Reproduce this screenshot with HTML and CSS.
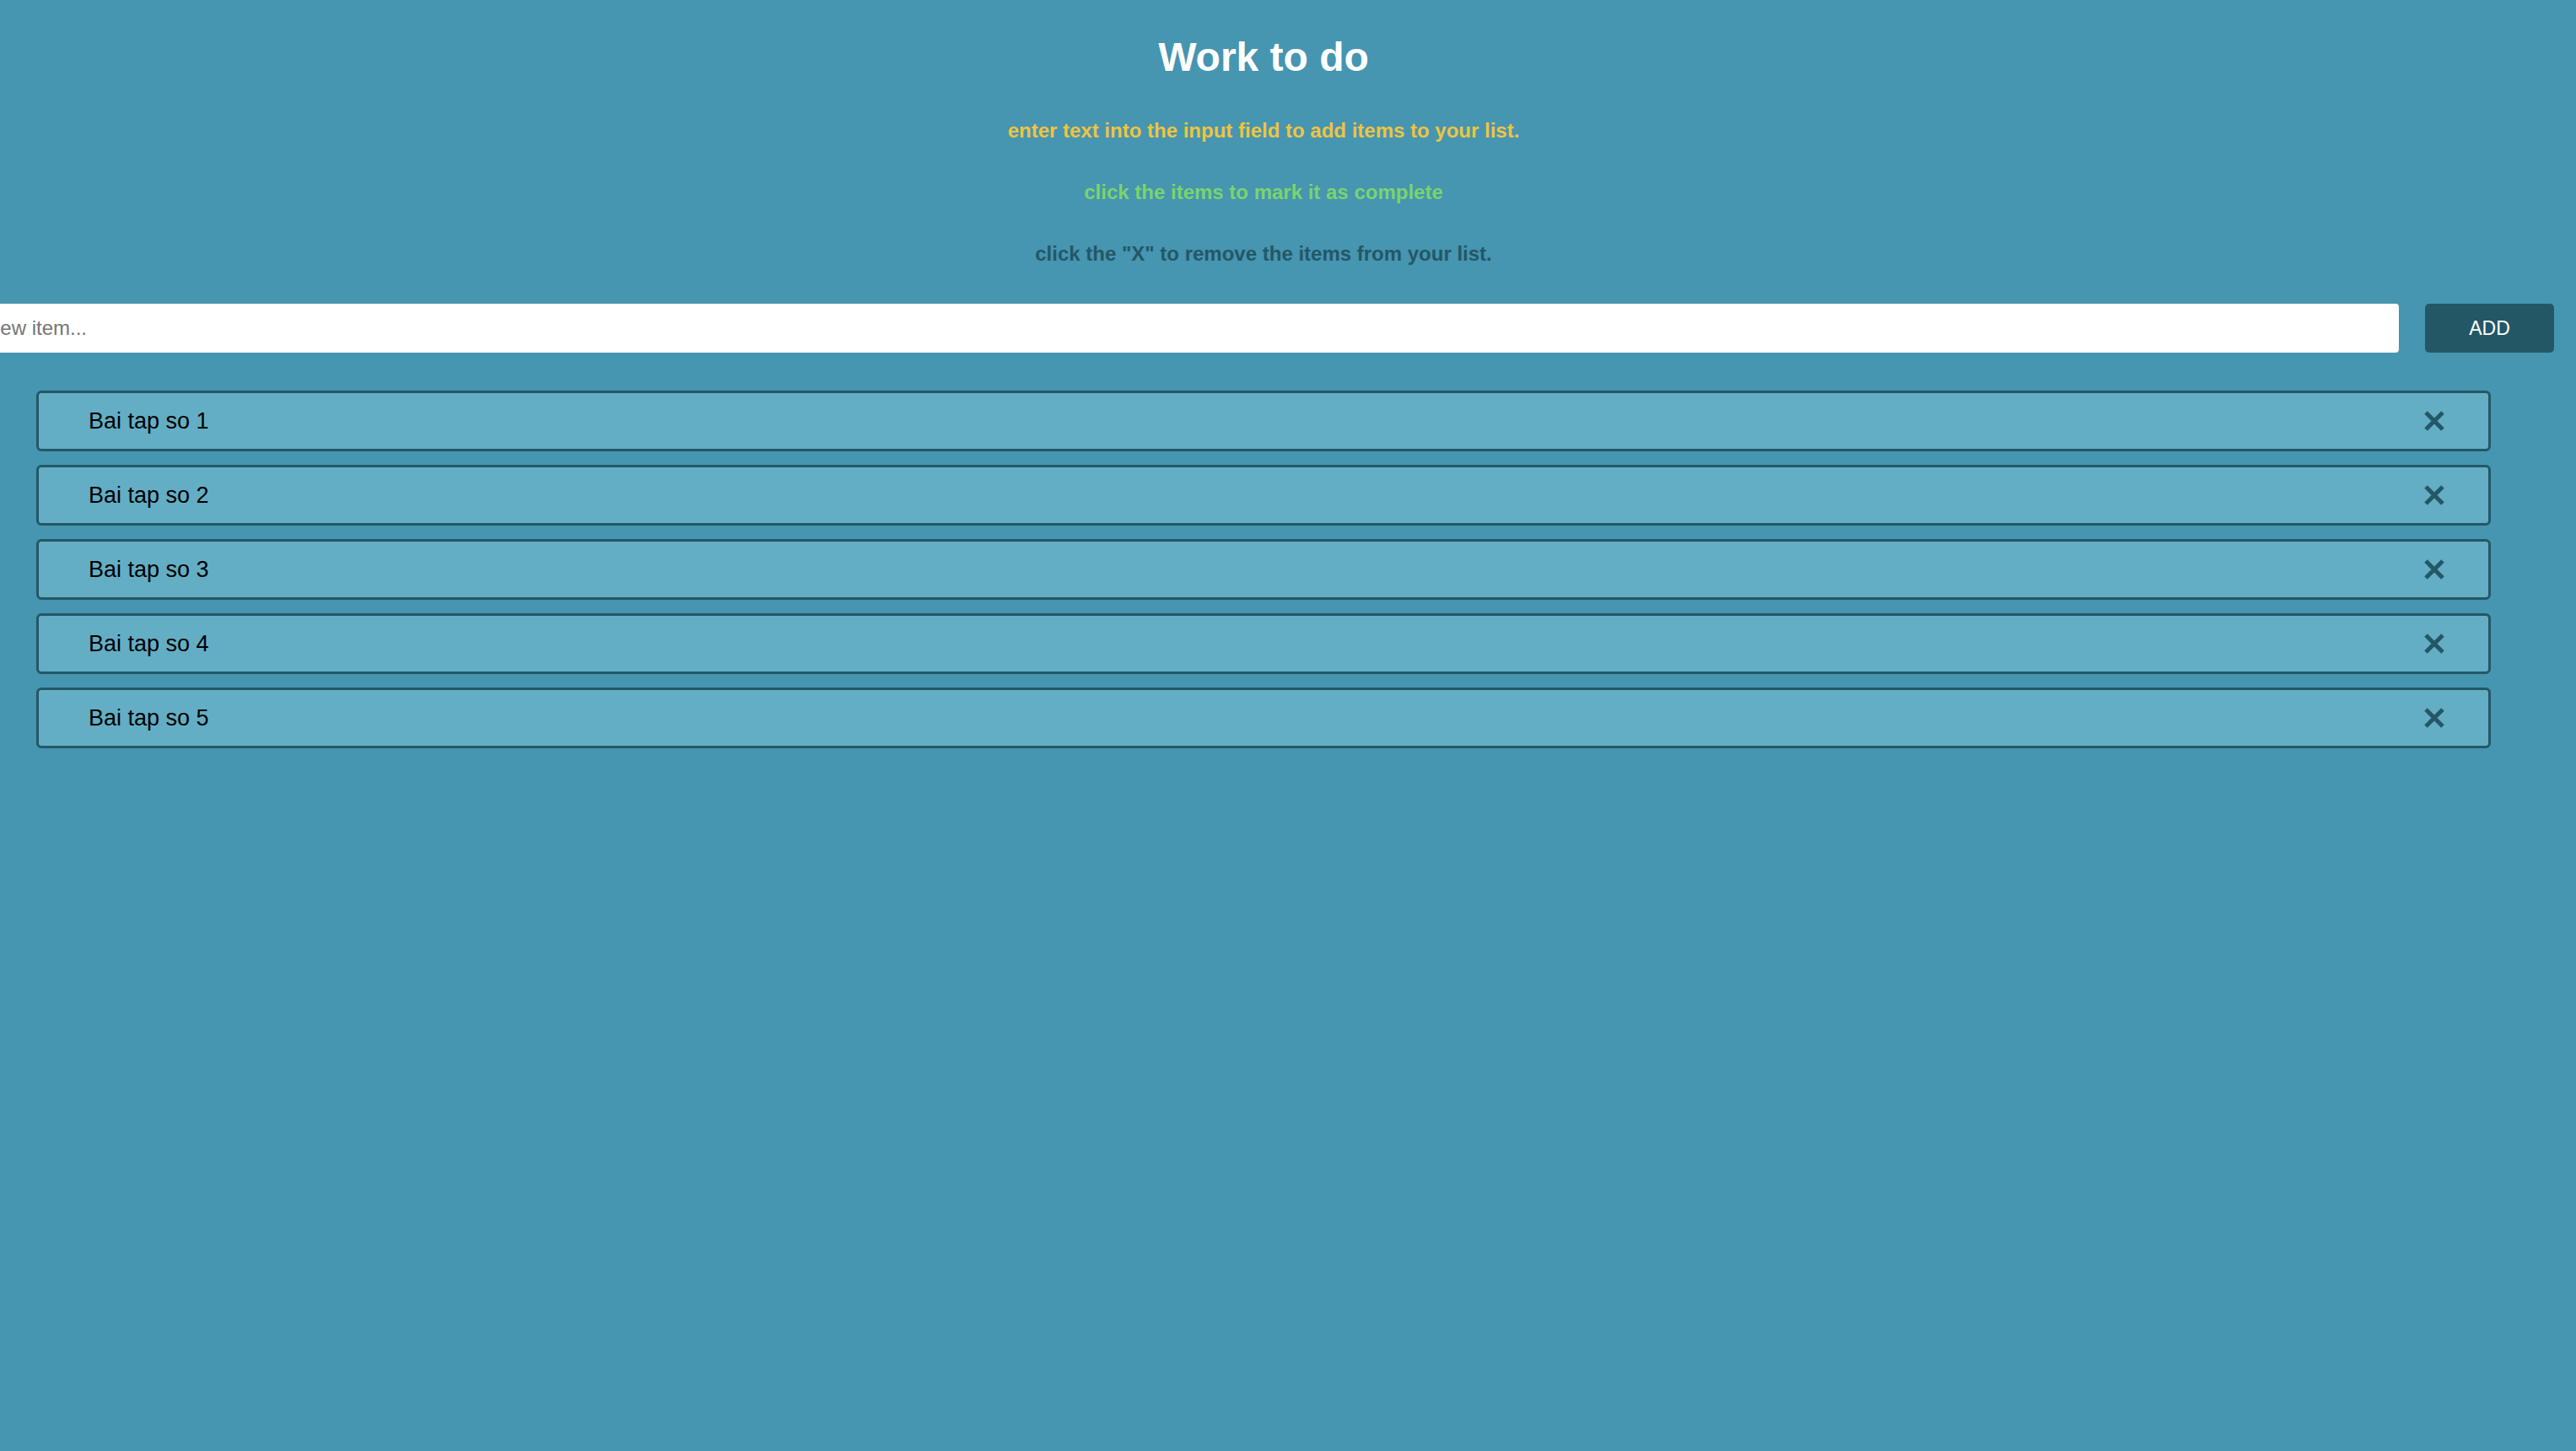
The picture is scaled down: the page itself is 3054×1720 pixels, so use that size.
FILE: index.html
```html
<!DOCTYPE html>
<html lang="en">
<head>
<meta charset="utf-8">
<title>Work to do</title>
<link rel="stylesheet" href="styles.css">
</head>
<body>
<div class="page">
  <header class="header">
    <h1 class="title">Work to do</h1>
    <p class="hint hint-yellow">enter text into the input field to add items to your list.</p>
    <p class="hint hint-green">click the items to mark it as complete</p>
    <p class="hint hint-dark">click the "X" to remove the items from your list.</p>
    <div class="add-row">
      <input class="add-input" type="text" placeholder="New item...">
      <button class="add-btn" type="button">ADD</button>
    </div>
  </header>
  <ul class="todo-list">
    <li class="todo-item"><span class="todo-text">Bai tap so 1</span><span class="close"><svg viewBox="0 0 24 24" width="24" height="24"><path d="M2 2 L22 22 M22 2 L2 22"/></svg></span></li>
    <li class="todo-item"><span class="todo-text">Bai tap so 2</span><span class="close"><svg viewBox="0 0 24 24" width="24" height="24"><path d="M2 2 L22 22 M22 2 L2 22"/></svg></span></li>
    <li class="todo-item"><span class="todo-text">Bai tap so 3</span><span class="close"><svg viewBox="0 0 24 24" width="24" height="24"><path d="M2 2 L22 22 M22 2 L2 22"/></svg></span></li>
    <li class="todo-item"><span class="todo-text">Bai tap so 4</span><span class="close"><svg viewBox="0 0 24 24" width="24" height="24"><path d="M2 2 L22 22 M22 2 L2 22"/></svg></span></li>
    <li class="todo-item"><span class="todo-text">Bai tap so 5</span><span class="close"><svg viewBox="0 0 24 24" width="24" height="24"><path d="M2 2 L22 22 M22 2 L2 22"/></svg></span></li>
  </ul>
</div>
</body>
</html>
```
FILE: styles.css
```css
html, body {
  margin: 0;
  padding: 0;
  background: #4695b1;
  font-family: "Liberation Sans", Arial, Helvetica, sans-serif;
  overflow: hidden;
}

.page {
  margin-left: -58px;
  min-height: 1720px;
}

.header {
  text-align: center;
  padding: 40px 26px 0;
}

.title {
  margin: 0;
  font-size: 48px;
  line-height: 56px;
  font-weight: bold;
  color: #ffffff;
}

.hint {
  margin: 45px 0 0;
  font-size: 24px;
  line-height: 28px;
  font-weight: bold;
}

.hint-yellow {
  color: #efc440;
}

.hint-green {
  color: #7ad46d;
}

.hint-dark {
  color: #245766;
}

.add-row {
  display: flex;
  gap: 31px;
  margin-top: 45px;
}

.add-input {
  flex: 1;
  height: 58px;
  box-sizing: border-box;
  border: none;
  border-radius: 4px;
  padding: 0 15px;
  font-family: "Liberation Sans", Arial, sans-serif;
  font-size: 24px;
  color: #333;
  background: #ffffff;
  outline: none;
}

.add-input::placeholder {
  color: #757575;
}

.add-btn {
  width: 153px;
  height: 58px;
  border: none;
  border-radius: 5px;
  background: #245766;
  color: #ffffff;
  font-family: "Liberation Sans", Arial, sans-serif;
  font-size: 23px;
  padding: 0;
}

.todo-list {
  list-style: none;
  margin: 45px 101px 0;
  padding: 0;
}

.todo-item {
  display: flex;
  align-items: center;
  justify-content: space-between;
  box-sizing: border-box;
  height: 72px;
  margin-bottom: 16px;
  padding: 0 52px 0 59px;
  background: #63aec4;
  border: 3px solid #245766;
  border-radius: 6px;
  font-size: 27px;
  color: #000000;
}

.close {
  display: flex;
  width: 24px;
  height: 24px;
}

.close svg path {
  stroke: #245766;
  stroke-width: 5;
  fill: none;
}
```
